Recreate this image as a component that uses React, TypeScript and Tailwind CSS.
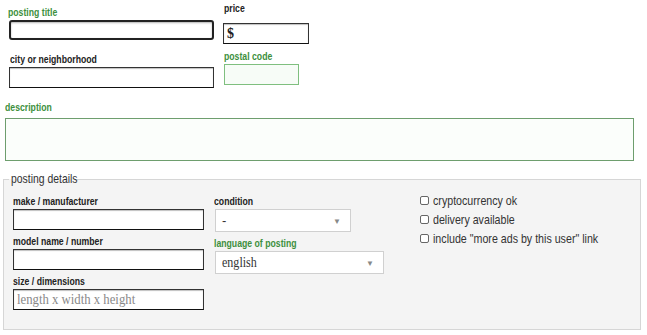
import React from "react";

const sans = { fontFamily: "'Liberation Sans', Arial, sans-serif" };
const serif = { fontFamily: "'Liberation Serif', 'Times New Roman', serif" };

function Label({ children, green = false, className = "" }: { children: React.ReactNode; green?: boolean; className?: string }) {
  return (
    <div style={sans} className={`h-[12px] whitespace-nowrap text-[11px] font-bold leading-[12px] ${green ? "text-[#3d8f3d]" : "text-[#222]"} ${className}`}>
      <span className="inline-block origin-left scale-x-[0.79]">{children}</span>
    </div>
  );
}

function DarkInput({ className = "", children }: { className?: string; children?: React.ReactNode }) {
  return (
    <div className={`border border-[#333] border-b-[#111] bg-white shadow-[inset_0_1px_1px_rgba(0,0,0,0.25)] ${className}`}>
      {children}
    </div>
  );
}

function Select({ value, w, serifText = false }: { value: string; w: string; serifText?: boolean }) {
  return (
    <div className={`mt-[2px] flex h-[23px] items-center justify-between border border-[#d0d0d0] bg-white pl-[6px] pr-[9px] ${w}`}>
      <span style={serifText ? serif : sans} className={serifText ? "inline-block origin-left scale-x-[0.86] text-[14px] text-[#333]" : "text-[13px] text-[#333]"}>
        {value}
      </span>
      <span className="text-[8px] text-[#888]">▼</span>
    </div>
  );
}

function Check({ label }: { label: string }) {
  return (
    <div className="flex h-[19px] items-center whitespace-nowrap" style={sans}>
      <span className="mr-[4px] inline-block h-[9px] w-[9px] shrink-0 rounded-[2px] border border-[#666] bg-white" />
      <span className="inline-block origin-left scale-x-[0.82] text-[13px] text-[#333]">{label}</span>
    </div>
  );
}

export default function App() {
  return (
    <div className="h-[335px] w-[647px] overflow-hidden bg-white">
      {/* top section */}
      <div className="flex pl-[9px]">
        <div className="w-[205px]">
          <Label green className="mt-[6px] -ml-[1px]">posting title</Label>
          <div className="mt-[2px] h-[20px] rounded-[3px] border-2 border-[#222] bg-white shadow-[inset_0_1px_2px_rgba(0,0,0,0.3)]" />
          <Label className="mt-[13px] ml-[1px]">city or neighborhood</Label>
          <DarkInput className="mt-[2px] h-[21px]" />
        </div>
        <div className="ml-[9px]">
          <Label className="mt-[2px] ml-[1px]">price</Label>
          <DarkInput className="mt-[9px] flex h-[21px] w-[86px] items-center pl-[3px]">
            <span style={serif} className="text-[14px] font-bold leading-none text-[#222]">$</span>
          </DarkInput>
          <Label green className="mt-[6px] ml-[1px]">postal code</Label>
          <div className="mt-[2px] ml-[1px] h-[21px] w-[75px] border border-[#7fbf7f] bg-[#f7fcf7]" />
        </div>
      </div>

      {/* description */}
      <div className="pl-[5px]">
        <Label green className="mt-[13px]">description</Label>
        <div className="mt-[5px] h-[43px] w-[629px] border border-[#6e9e6e] bg-[#fbfefb]" />
      </div>

      {/* posting details */}
      <fieldset className="mt-[11px] ml-[3px] h-[158px] w-[638px] border border-[#d6d6d6] bg-[#f4f4f4] pl-[9px]">
        <legend style={sans} className="-ml-[4px] w-[68px] overflow-visible whitespace-nowrap px-[2px] text-[13px] leading-[14px] text-[#333]">
          <span className="inline-block origin-left scale-x-[0.8]">posting details</span>
        </legend>
        <div className="flex">
          <div className="w-[191px]">
            <Label className="mt-[9px]">make / manufacturer</Label>
            <DarkInput className="mt-[2px] h-[21px]" />
            <Label className="mt-[5px]">model name / number</Label>
            <DarkInput className="mt-[2px] h-[21px]" />
            <Label className="mt-[5px]">size / dimensions</Label>
            <DarkInput className="mt-[2px] flex h-[21px] items-center pl-[3px]">
              <span style={serif} className="inline-block origin-left scale-x-[0.91] text-[14px] leading-none text-[#888]">length x width x height</span>
            </DarkInput>
          </div>
          <div className="ml-[10px]">
            <Label className="mt-[9px]">condition</Label>
            <Select value="-" w="w-[136px] ml-[1px]" />
            <Label green className="mt-[5px]">language of posting</Label>
            <Select value="english" w="w-[169px] ml-[1px]" serifText />
          </div>
          <div className="ml-[36px] mt-[5px]">
            <Check label="cryptocurrency ok" />
            <Check label="delivery available" />
            <Check label={'include "more ads by this user" link'} />
          </div>
        </div>
      </fieldset>
    </div>
  );
}
